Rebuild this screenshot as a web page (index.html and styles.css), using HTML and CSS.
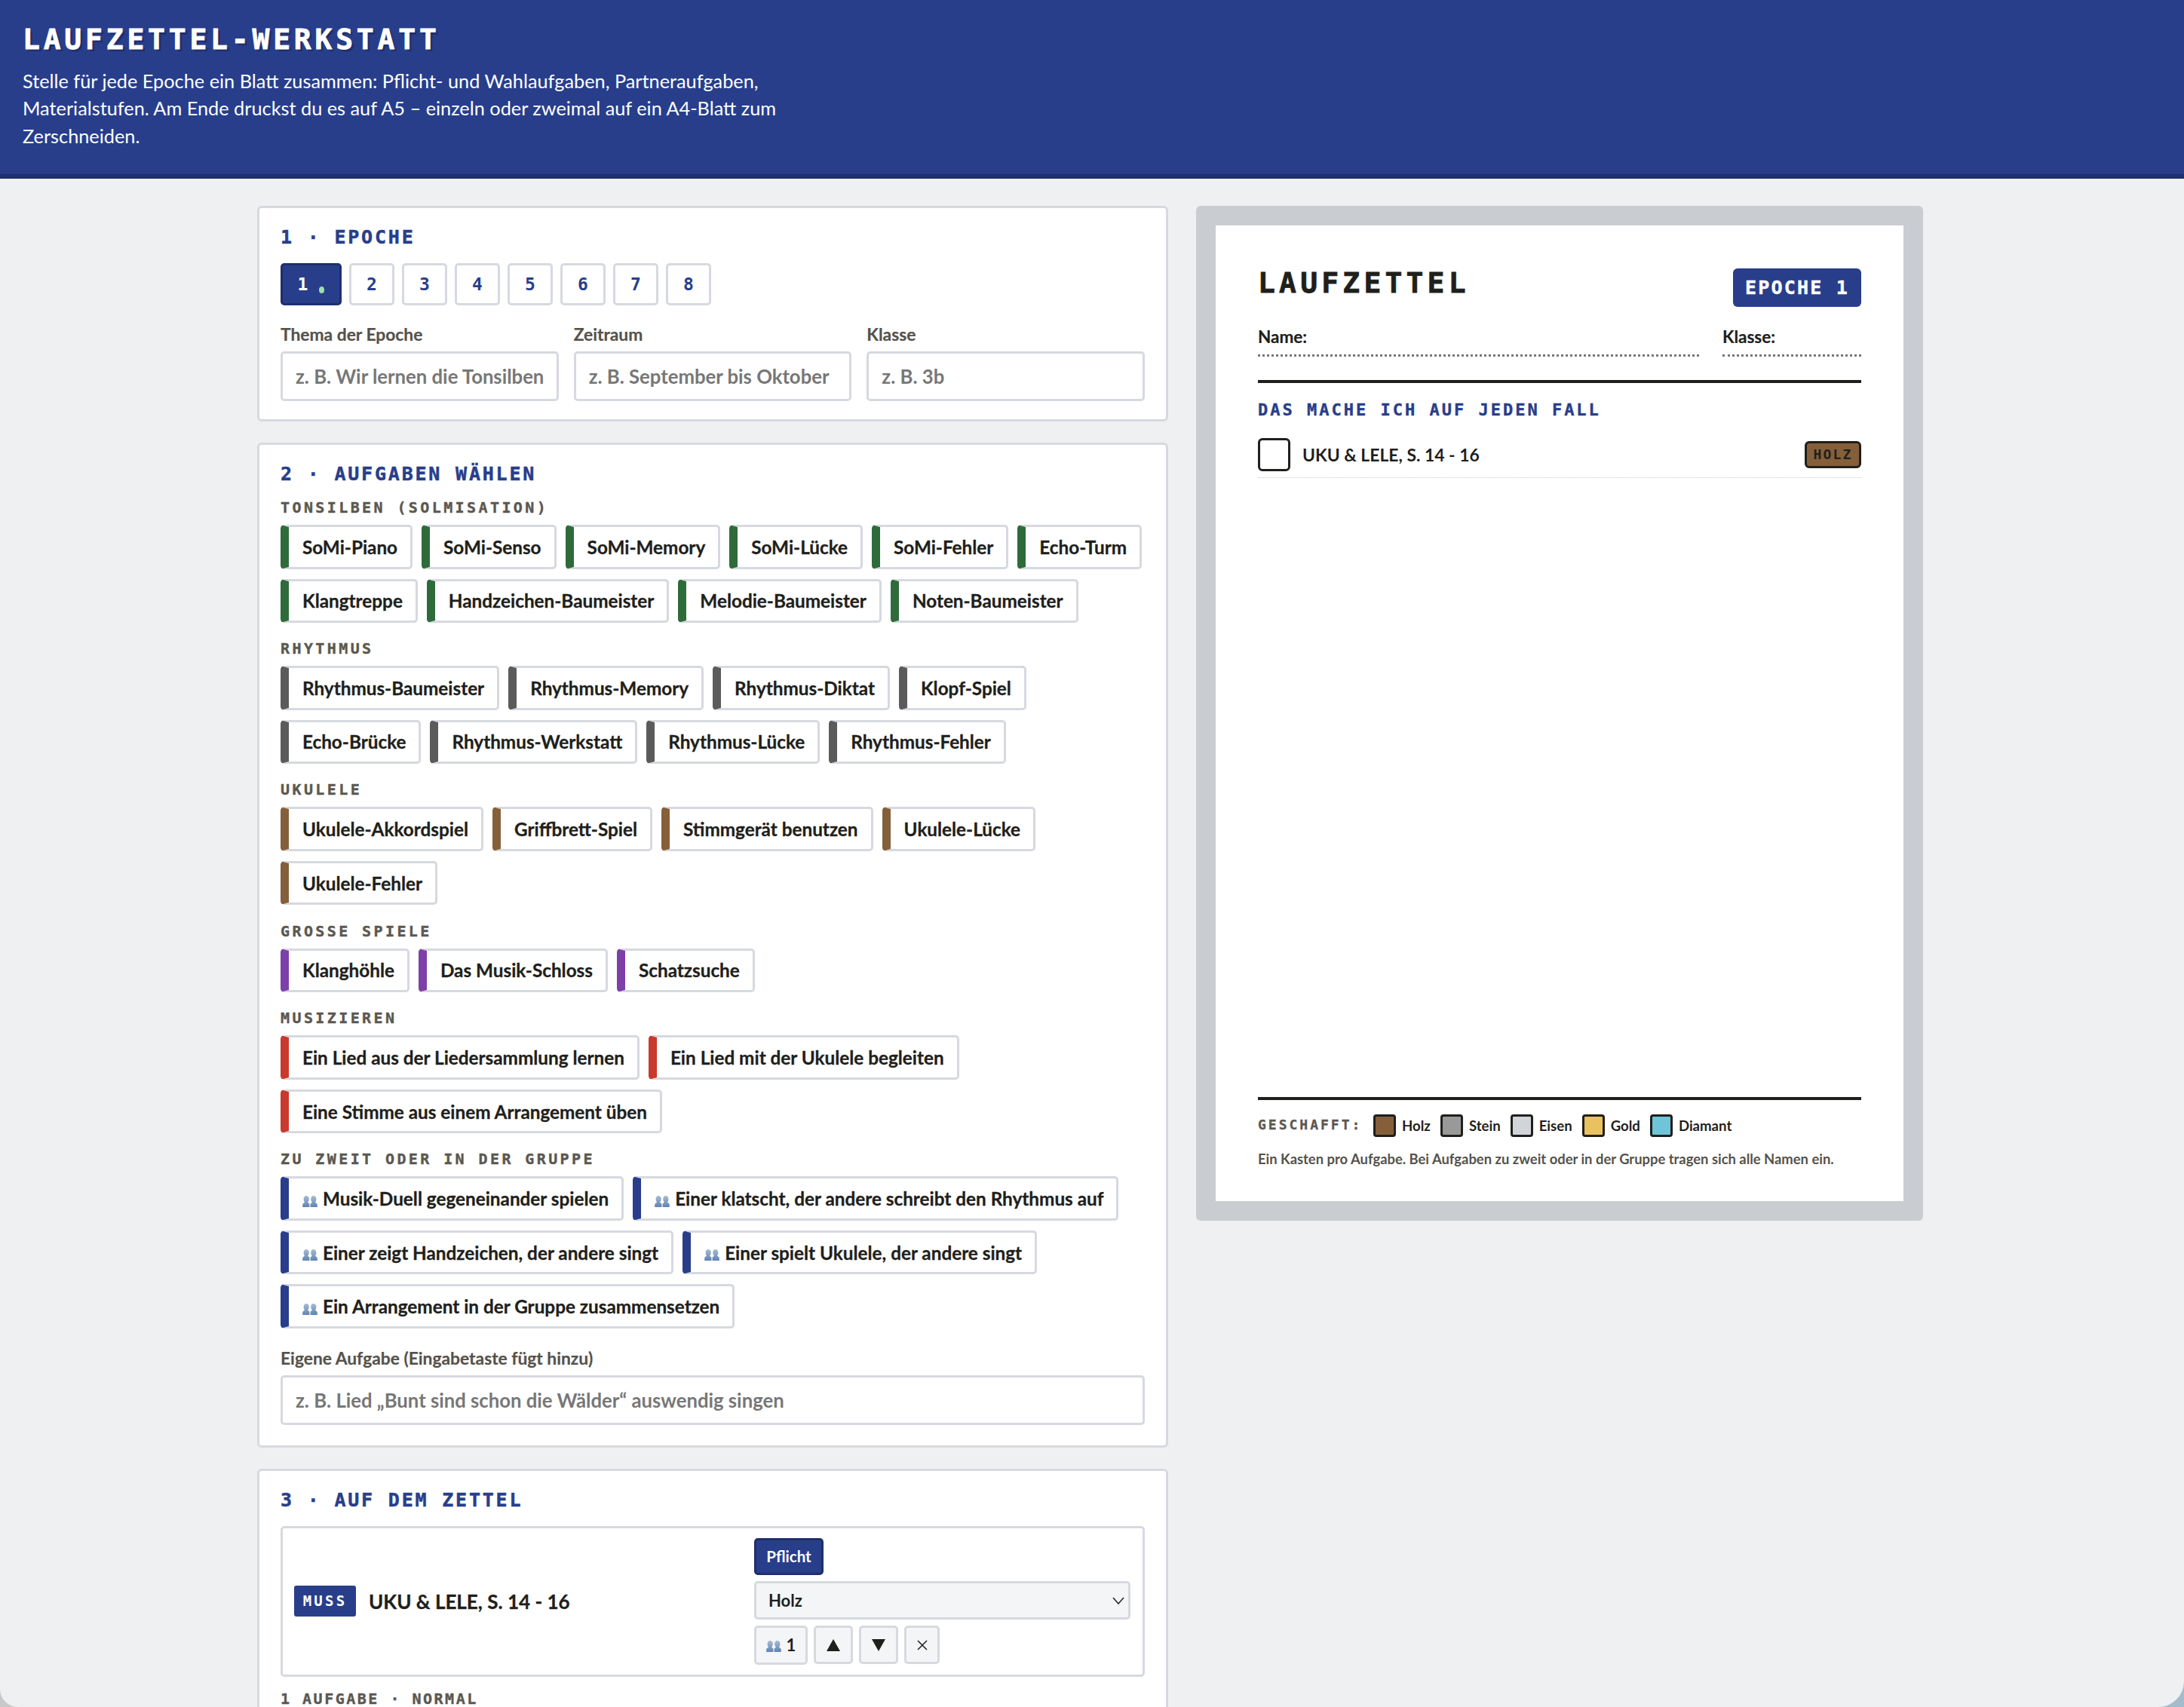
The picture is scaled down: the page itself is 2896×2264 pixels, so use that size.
FILE: index.html
```html
<!DOCTYPE html>
<html lang="de">
  <head>
    <meta charset="UTF-8" />
    <title>Laufzettel-Werkstatt</title>
    <link rel="stylesheet" href="styles.css">
  </head>
  <body>
    <svg class="defs" width="0" height="0">
      <defs>
        <linearGradient id="fade" x1="0" y1="0" x2="0" y2="1">
          <stop offset="0" stop-color="#a9bcd4" />
          <stop offset="1" stop-color="#5d84b2" />
        </linearGradient>
      </defs>
      <symbol id="people" viewBox="0 0 20 15">
        <path d="M5.2 0C7.4 0 8.8 1.8 8.8 4.2c0 1.8-.8 3.2-1.6 4 .2.9 1.1 1.5 2.2 2.2V15H.2v-3.6c0-.8 1.900-1.800 2.800-3.200C2.200 7.400 1.600 6 1.600 4.200 1.600 1.800 3 0 5.200 0z" fill="url(#fade)" />
        <path d="M14.800 0c2.200 0 3.600 1.800 3.600 4.200 0 1.800-.6 3.200-1.400 4 .9 1.400 2.800 2.400 2.800 3.200V15h-9.200v-4.600c1.100-.7 2-1.300 2.200-2.200-.8-.8-1.600-2.200-1.600-4C11.200 1.800 12.600 0 14.800 0z" fill="url(#fade)" />
      </symbol>
    </svg>

    <header class="top">
      <h1>Laufzettel-Werkstatt</h1>
      <p>Stelle für jede Epoche ein Blatt zusammen: Pflicht- und Wahlaufgaben, Partneraufgaben, Materialstufen. Am Ende druckst du es auf A5 – einzeln oder zweimal auf ein A4-Blatt zum Zerschneiden.</p>
    </header>

    <main class="layout">
      <div class="editor">
        <section class="card">
          <h2>1 · Epoche</h2>
          <div class="tabs">
            <button class="tab active">1<span class="dot"></span></button>
            <button class="tab">2</button>
            <button class="tab">3</button>
            <button class="tab">4</button>
            <button class="tab">5</button>
            <button class="tab">6</button>
            <button class="tab">7</button>
            <button class="tab">8</button>
          </div>
          <div class="fields">
            <label>Thema der Epoche<input type="text" placeholder="z. B. Wir lernen die Tonsilben" /></label>
            <label>Zeitraum<input type="text" placeholder="z. B. September bis Oktober" /></label>
            <label>Klasse<input type="text" placeholder="z. B. 3b" /></label>
          </div>
        </section>

        <section class="card">
          <h2>2 · Aufgaben wählen</h2>

          <h3>Tonsilben (Solmisation)</h3>
          <div class="chips green">
            <button class="chip">SoMi-Piano</button>
            <button class="chip">SoMi-Senso</button>
            <button class="chip">SoMi-Memory</button>
            <button class="chip">SoMi-Lücke</button>
            <button class="chip">SoMi-Fehler</button>
            <button class="chip">Echo-Turm</button>
            <button class="chip">Klangtreppe</button>
            <button class="chip">Handzeichen-Baumeister</button>
            <button class="chip">Melodie-Baumeister</button>
            <button class="chip">Noten-Baumeister</button>
          </div>

          <h3>Rhythmus</h3>
          <div class="chips grey">
            <button class="chip">Rhythmus-Baumeister</button>
            <button class="chip">Rhythmus-Memory</button>
            <button class="chip">Rhythmus-Diktat</button>
            <button class="chip">Klopf-Spiel</button>
            <button class="chip">Echo-Brücke</button>
            <button class="chip">Rhythmus-Werkstatt</button>
            <button class="chip">Rhythmus-Lücke</button>
            <button class="chip">Rhythmus-Fehler</button>
          </div>

          <h3>Ukulele</h3>
          <div class="chips brown">
            <button class="chip">Ukulele-Akkordspiel</button>
            <button class="chip">Griffbrett-Spiel</button>
            <button class="chip">Stimmgerät benutzen</button>
            <button class="chip">Ukulele-Lücke</button>
            <button class="chip">Ukulele-Fehler</button>
          </div>

          <h3>Große Spiele</h3>
          <div class="chips purple">
            <button class="chip">Klanghöhle</button>
            <button class="chip">Das Musik-Schloss</button>
            <button class="chip">Schatzsuche</button>
          </div>

          <h3>Musizieren</h3>
          <div class="chips red">
            <button class="chip">Ein Lied aus der Liedersammlung lernen</button>
            <button class="chip">Ein Lied mit der Ukulele begleiten</button>
            <button class="chip">Eine Stimme aus einem Arrangement üben</button>
          </div>

          <h3>Zu zweit oder in der Gruppe</h3>
          <div class="chips blue">
            <button class="chip"><svg class="people"><use href="#people" /></svg>Musik-Duell gegeneinander spielen</button>
            <button class="chip"><svg class="people"><use href="#people" /></svg>Einer klatscht, der andere schreibt den Rhythmus auf</button>
            <button class="chip"><svg class="people"><use href="#people" /></svg>Einer zeigt Handzeichen, der andere singt</button>
            <button class="chip"><svg class="people"><use href="#people" /></svg>Einer spielt Ukulele, der andere singt</button>
            <button class="chip"><svg class="people"><use href="#people" /></svg>Ein Arrangement in der Gruppe zusammensetzen</button>
          </div>

          <label class="own">Eigene Aufgabe (Eingabetaste fügt hinzu)<input type="text" placeholder="z. B. Lied „Bunt sind schon die Wälder“ auswendig singen" /></label>
        </section>

        <section class="card">
          <h2>3 · Auf dem Zettel</h2>
          <div class="item">
            <div class="item-name"><span class="must">Muss</span>UKU &amp; LELE, S. 14 - 16</div>
            <div class="item-controls">
              <div><button class="duty">Pflicht</button></div>
              <div class="select-box">
                <select>
                  <option>Holz</option>
                  <option>Stein</option>
                  <option>Eisen</option>
                  <option>Gold</option>
                  <option>Diamant</option>
                </select>
                <svg class="caret" viewBox="0 0 16 10"><path d="M1 1l7 8 7-8" fill="none" stroke="#222" stroke-width="1.5" /></svg>
              </div>
              <div class="small-buttons">
                <button class="small"><svg class="people"><use href="#people" /></svg>1</button>
                <button class="small"><svg class="tri" viewBox="0 0 18 16"><path d="M9 0l9 16H0z" fill="#1f1f1c" /></svg></button>
                <button class="small"><svg class="tri" viewBox="0 0 18 16"><path d="M9 16L0 0h18z" fill="#1f1f1c" /></svg></button>
                <button class="small"><svg class="cross" viewBox="0 0 14 14"><path d="M1 1l12 12M13 1L1 13" fill="none" stroke="#1f1f1c" stroke-width="1.5" /></svg></button>
              </div>
            </div>
          </div>
          <div class="status">1 Aufgabe · normal</div>
        </section>
      </div>

      <aside class="preview">
        <div class="paper">
          <div class="paper-head">
            <div class="paper-title">Laufzettel</div>
            <div class="paper-badge">Epoche 1</div>
          </div>
          <div class="paper-lines">
            <div class="line-name">Name:</div>
            <div class="line-class">Klasse:</div>
          </div>
          <h4>Das mache ich auf jeden Fall</h4>
          <div class="task">
            <span class="box"></span>
            <span class="task-text">UKU &amp; LELE, S. 14 - 16</span>
            <span class="level">Holz</span>
          </div>
          <div class="paper-foot">
            <div class="legend">
              <span class="done">Geschafft:</span>
              <span class="swatch wood"></span><span class="swatch-label">Holz</span>
              <span class="swatch stone"></span><span class="swatch-label">Stein</span>
              <span class="swatch iron"></span><span class="swatch-label">Eisen</span>
              <span class="swatch gold"></span><span class="swatch-label">Gold</span>
              <span class="swatch diamond"></span><span class="swatch-label">Diamant</span>
            </div>
            <p class="note">Ein Kasten pro Aufgabe. Bei Aufgaben zu zweit oder in der Gruppe tragen sich alle Namen ein.</p>
          </div>
        </div>
      </aside>
    </main>
  </body>
</html>
```

FILE: styles.css
```css
* {
  box-sizing: border-box;
}

html,
body {
  height: 2264px;
  overflow: hidden;
}

html {
  background: linear-gradient(to right, #c9c9c9, #a3bccb);
}

body {
  margin: 0;
  background-color: #eff0f2;
  border-radius: 0 0 34px 24px;
  color: #1f1f1c;
  font-family: Lato, Arial, sans-serif;
}

button,
input,
select {
  font-family: inherit;
}

.defs {
  position: absolute;
}

/* Kopf */
.top {
  height: 237px;
  padding: 32px 30px 0;
  background-color: #283e8b;
  border-bottom: 6px solid #1f2f6b;
  color: #fff;
}

.top h1 {
  margin: 0;
  font-family: "DejaVu Sans Mono", monospace;
  font-size: 38px;
  line-height: 40px;
  font-weight: 700;
  letter-spacing: 4.8px;
  text-transform: uppercase;
  text-shadow: 3px 3px 0 #1f2f6b;
  -webkit-text-stroke: 0.8px #fff;
}

.top p {
  width: 1040px;
  margin: 17px 0 0;
  font-size: 25.3px;
  line-height: 36.4px;
}

/* Spalten */
.layout {
  display: grid;
  grid-template-columns: 1208px 964px;
  gap: 37px;
  width: 2209px;
  margin: 36px 0 0 341px;
  align-items: start;
}

.editor {
  display: flex;
  flex-direction: column;
  gap: 28px;
}

.card {
  padding: 24px 28px 24px;
  background-color: #fff;
  border: 3px solid #d6d9df;
  border-radius: 6px;
}

.card h2 {
  margin: 0 0 17px;
  font-family: "DejaVu Sans Mono", monospace;
  font-size: 25px;
  line-height: 30px;
  font-weight: 700;
  letter-spacing: 2.8px;
  text-transform: uppercase;
  color: #283e8b;
  -webkit-text-stroke: 0.5px #283e8b;
}

.card h3 {
  margin: 22.2px 0 11px;
  font-family: "DejaVu Sans Mono", monospace;
  font-size: 20px;
  line-height: 24px;
  font-weight: 700;
  letter-spacing: 3.4px;
  text-transform: uppercase;
  color: #5b5850;
  -webkit-text-stroke: 0.4px #5b5850;
}

.card h2 + h3 {
  margin-top: 0;
}

/* Epochen */
.tabs {
  display: flex;
  gap: 10px;
  margin-top: 19px;
}

.tab {
  width: 60px;
  height: 56px;
  padding: 0;
  background-color: #fff;
  border: 3px solid #d6d9df;
  border-radius: 5px;
  color: #283e8b;
  font-family: "DejaVu Sans Mono", monospace;
  font-size: 23px;
  font-weight: 700;
}

.tab.active {
  width: 81px;
  background-color: #283e8b;
  border-color: #1f2f6b;
  color: #fff;
}

.dot {
  display: inline-block;
  width: 7px;
  height: 9px;
  margin-left: 15px;
  border-radius: 50%;
  background-color: #9be0a5;
  vertical-align: -4px;
}

.fields {
  display: grid;
  grid-template-columns: 1fr 1fr 1fr;
  gap: 20px;
  margin-top: 23px;
}

label {
  display: block;
  font-size: 22.8px;
  line-height: 30px;
  font-weight: 700;
  color: #55524b;
  -webkit-text-stroke: 0.2px #55524b;
}

input {
  display: block;
  width: 100%;
  height: 66px;
  margin-top: 8px;
  padding: 0 17px;
  background-color: #fff;
  border: 3px solid #d6d9df;
  border-radius: 5px;
  font-size: 25.7px;
  font-weight: 700;
  -webkit-text-stroke: 0;
}

input::placeholder {
  color: #777;
  opacity: 1;
}

/* Aufgaben */
.chips {
  display: flex;
  flex-wrap: wrap;
  gap: 13px 12px;
}

.chip {
  display: flex;
  align-items: center;
  height: 58.5px;
  padding: 0 17px 0 18px;
  background-color: #fff;
  border: 3px solid #d6d9df;
  border-left-width: 11px;
  border-radius: 5px;
  color: #1f1f1c;
  font-size: 24.3px;
  font-weight: 700;
  white-space: nowrap;
  -webkit-text-stroke: 0.3px #1f1f1c;
}

.green .chip { border-left-color: #2f6b3a; }
.grey .chip { border-left-color: #5b5b5b; }
.brown .chip { border-left-color: #855f3a; }
.purple .chip { border-left-color: #7f3fa8; }
.red .chip { border-left-color: #c9392e; }
.blue .chip { border-left-color: #283e8b; }

.people {
  flex: none;
  width: 20px;
  height: 15px;
  margin: 7px 7px 0 0;
}

.own {
  margin-top: 24px;
  margin-bottom: 3px;
}

/* Auf dem Zettel */
.item {
  display: flex;
  align-items: center;
  justify-content: space-between;
  margin-top: 19px;
  padding: 13px 16px 13px 15px;
  border: 3px solid #d6d9df;
  border-radius: 5px;
}

.item-name {
  display: flex;
  align-items: center;
  font-size: 26px;
  font-weight: 700;
  -webkit-text-stroke: 0.3px #1f1f1c;
}

.must {
  width: 82px;
  height: 41px;
  margin-right: 17px;
  background-color: #283e8b;
  border-radius: 3px;
  color: #fff;
  font-family: "DejaVu Sans Mono", monospace;
  font-size: 19px;
  line-height: 41px;
  font-weight: 700;
  letter-spacing: 3.2px;
  text-align: center;
  text-transform: uppercase;
  -webkit-text-stroke: 0;
}

.item-controls {
  display: flex;
  flex-direction: column;
  gap: 8px;
  width: 499px;
}

.duty {
  display: block;
  width: 92px;
  height: 49px;
  padding: 0;
  background-color: #283e8b;
  border: 3px solid #1f2f6b;
  border-radius: 5px;
  color: #fff;
  font-size: 20.5px;
  font-weight: 700;
}

.select-box {
  position: relative;
}

.select-box select {
  display: block;
  width: 100%;
  height: 51px;
  padding: 0 16px;
  appearance: none;
  background-color: #f4f5f7;
  border: 3px solid #d6d9df;
  border-radius: 5px;
  color: #1f1f1c;
  font-size: 22px;
  font-weight: 700;
}

.caret {
  position: absolute;
  top: 21px;
  right: 8px;
  width: 16px;
  height: 10px;
}

.small-buttons {
  display: flex;
  align-items: center;
  gap: 8px;
}

.small {
  display: flex;
  align-items: center;
  justify-content: center;
  width: 52px;
  height: 51px;
  padding: 0;
  background-color: #f4f5f7;
  border: 3px solid #d6d9df;
  border-radius: 5px;
  color: #1f1f1c;
  font-size: 22px;
  font-weight: 700;
}

.small:first-child {
  width: 71px;
  height: 52px;
}

.small:last-child {
  width: 47px;
}

.small .people {
  margin: 4px 7px 0 0;
}

.tri {
  width: 18px;
  height: 16px;
}

.cross {
  width: 14px;
  height: 14px;
}

.status {
  margin-top: 17px;
  font-family: "DejaVu Sans Mono", monospace;
  font-size: 20px;
  line-height: 24px;
  font-weight: 700;
  letter-spacing: 2.5px;
  text-transform: uppercase;
  color: #5b5850;
  -webkit-text-stroke: 0.4px #5b5850;
}

/* Vorschau */
.preview {
  padding: 26px;
  background-color: #c9ccd1;
  border-radius: 6px;
}

.paper {
  display: flex;
  flex-direction: column;
  height: 1294px;
  padding: 56px 56px 43px;
  background-color: #fff;
}

.paper-head {
  display: flex;
  justify-content: space-between;
  align-items: flex-start;
}

.paper-title {
  font-family: "DejaVu Sans Mono", monospace;
  font-size: 38px;
  line-height: 40px;
  font-weight: 700;
  letter-spacing: 5.2px;
  text-transform: uppercase;
  -webkit-text-stroke: 0.8px #1f1f1c;
}

.paper-badge {
  width: 170px;
  height: 51px;
  margin-top: 1px;
  background-color: #283e8b;
  border-radius: 6px;
  color: #fff;
  font-family: "DejaVu Sans Mono", monospace;
  font-size: 25px;
  line-height: 51px;
  font-weight: 700;
  letter-spacing: 2.2px;
  text-align: center;
  text-transform: uppercase;
  -webkit-text-stroke: 0.4px #fff;
}

.paper-lines {
  display: grid;
  grid-template-columns: 585px 184px;
  gap: 31px;
  padding-bottom: 31px;
  margin-top: 25px;
  border-bottom: 4px solid #1f1f1c;
}

.line-name,
.line-class {
  height: 41px;
  border-bottom: 3px dotted #777;
  font-size: 22.5px;
  line-height: 30px;
  font-weight: 700;
  -webkit-text-stroke: 0.2px #1f1f1c;
}

.paper h4 {
  margin: 23px 0 0;
  font-family: "DejaVu Sans Mono", monospace;
  font-size: 22px;
  line-height: 26px;
  font-weight: 700;
  letter-spacing: 3px;
  text-transform: uppercase;
  color: #283e8b;
  -webkit-text-stroke: 0.4px #283e8b;
}

.task {
  display: flex;
  align-items: center;
  gap: 16px;
  margin-top: 24px;
  padding-bottom: 8px;
  border-bottom: 1px dotted #ccc;
}

.box {
  flex: none;
  width: 43px;
  height: 44px;
  border: 3px solid #1f1f1c;
  border-radius: 6px;
}

.task-text {
  flex: 1;
  font-size: 22.9px;
  font-weight: 700;
}

.level {
  width: 75px;
  height: 36px;
  background-color: #855f3a;
  border: 3px solid #1f1f1c;
  border-radius: 6px;
  font-family: "DejaVu Sans Mono", monospace;
  font-size: 18px;
  line-height: 30px;
  font-weight: 700;
  letter-spacing: 2.2px;
  text-align: center;
  text-transform: uppercase;
}

.paper-foot {
  margin-top: auto;
  padding-top: 19px;
  border-top: 4px solid #1f1f1c;
}

.legend {
  display: flex;
  align-items: center;
  height: 30px;
}

.done {
  width: 153px;
  padding-bottom: 4px;
  font-family: "DejaVu Sans Mono", monospace;
  font-size: 18px;
  font-weight: 700;
  letter-spacing: 3px;
  text-transform: uppercase;
  color: #5b5850;
  -webkit-text-stroke: 0.3px #5b5850;
}

.swatch {
  width: 30px;
  height: 30px;
  margin-right: 8px;
  border: 3px solid #1f1f1c;
  border-radius: 4px;
}

.swatch-label {
  margin-right: 13px;
  font-size: 18.6px;
  font-weight: 700;
}

.wood { background-color: #855f3a; }
.stone { background-color: #999; }
.iron { background-color: #d1d4d9; }
.gold { background-color: #e9c25f; }
.diamond { background-color: #6ec5d8; }

.note {
  margin: 16px 0 0;
  font-size: 18.4px;
  line-height: 26px;
  font-weight: 700;
  color: #55524b;
}
```
